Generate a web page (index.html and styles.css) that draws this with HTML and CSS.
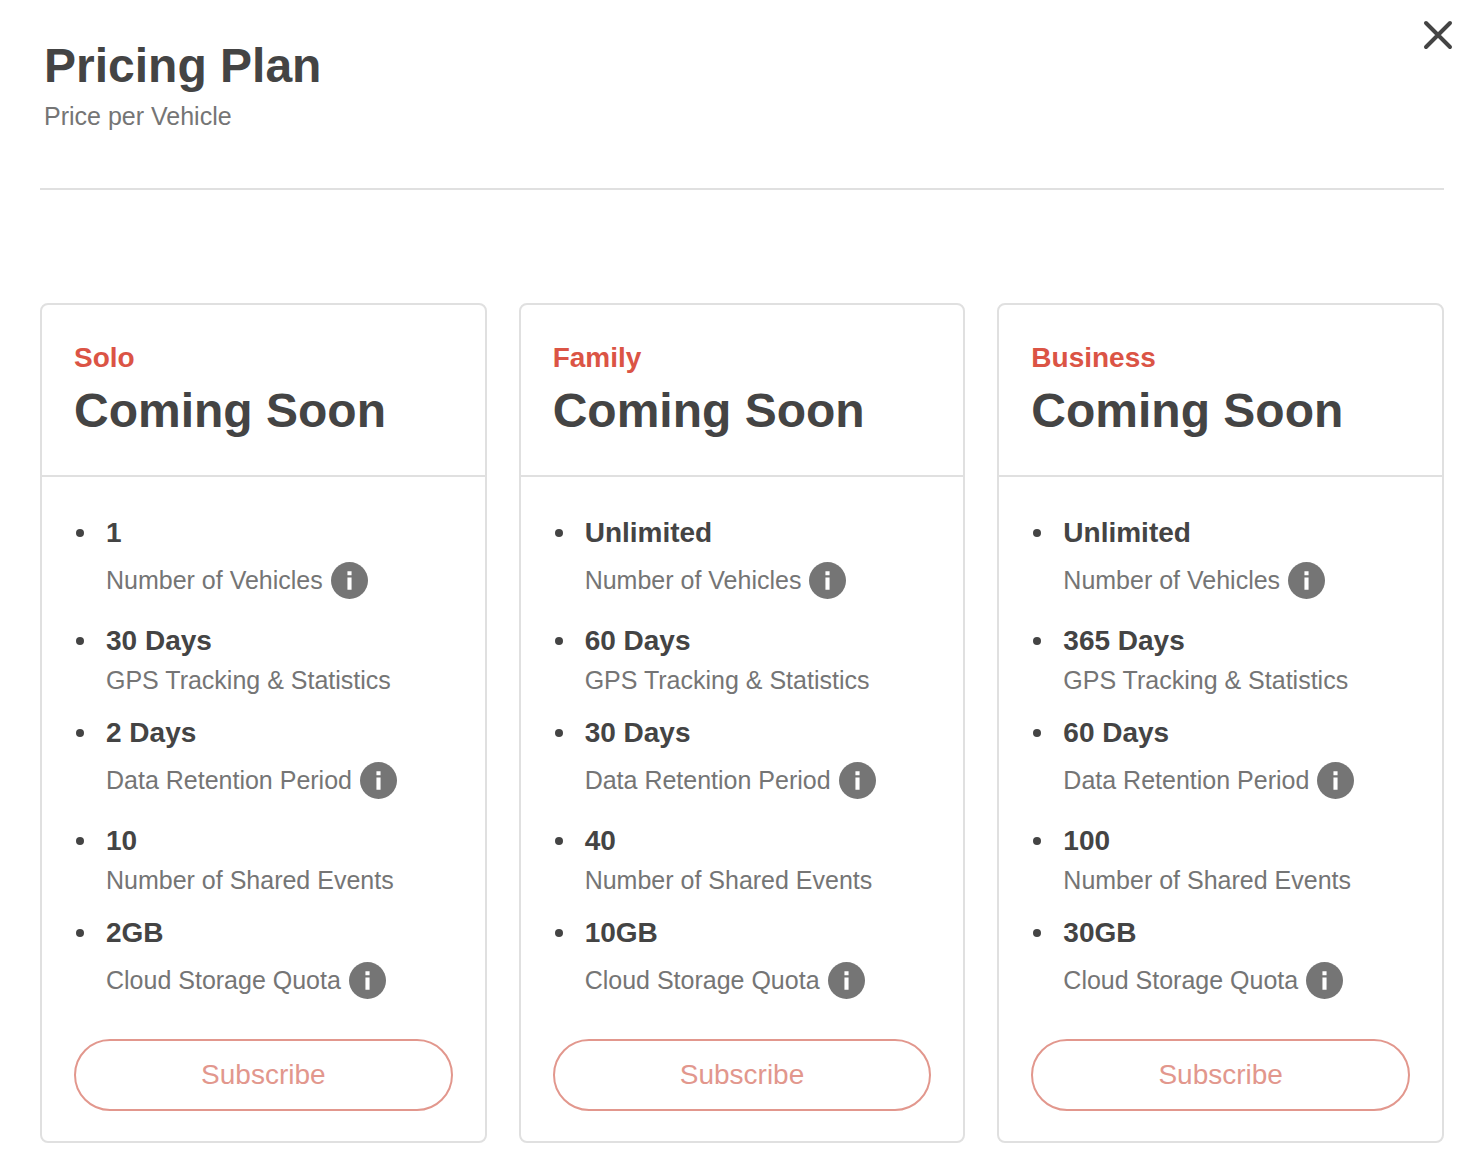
FILE: index.html
```html
<!DOCTYPE html>
<html lang="en">
<head>
    <meta charset="UTF-8">
    <meta name="viewport" content="width=device-width, initial-scale=1.0">
    <title>Pricing Plan</title>
    <link rel="stylesheet" href="styles.css">
</head>
<body>
    <svg class="sprite" aria-hidden="true">
        <symbol id="info" viewBox="0 0 36 36">
            <circle cx="18" cy="18" r="18" fill="currentColor"/>
            <path d="M16 9h4v4h-4zM16 15h4v12h-4z" fill="#fff"/>
        </symbol>
    </svg>

    <header class="header">
        <div class="heading">
            <h1>Pricing Plan</h1>
            <p class="subtitle">Price per Vehicle</p>
        </div>
        <button class="close" type="button" aria-label="Close">
            <svg width="30" height="30" viewBox="0 0 30 30"><path d="M3 3L27 27M27 3L3 27"/></svg>
        </button>
    </header>
    <hr>

    <main class="plans">
        <section class="card">
            <div class="card-header">
                <h2>Solo</h2>
                <p class="price">Coming Soon</p>
            </div>
            <div class="card-body">
                <ul class="features">
                    <li>
                        <strong>1</strong>
                        <span class="label with-info">Number of Vehicles <button class="info" type="button" aria-label="About number of vehicles"><svg><use href="#info"/></svg></button></span>
                    </li>
                    <li>
                        <strong>30 Days</strong>
                        <span class="label">GPS Tracking &amp; Statistics</span>
                    </li>
                    <li>
                        <strong>2 Days</strong>
                        <span class="label with-info">Data Retention Period <button class="info" type="button" aria-label="About data retention period"><svg><use href="#info"/></svg></button></span>
                    </li>
                    <li>
                        <strong>10</strong>
                        <span class="label">Number of Shared Events</span>
                    </li>
                    <li>
                        <strong>2GB</strong>
                        <span class="label with-info">Cloud Storage Quota <button class="info" type="button" aria-label="About cloud storage quota"><svg><use href="#info"/></svg></button></span>
                    </li>
                </ul>
                <button class="subscribe" type="button" disabled>Subscribe</button>
            </div>
        </section>

        <section class="card">
            <div class="card-header">
                <h2>Family</h2>
                <p class="price">Coming Soon</p>
            </div>
            <div class="card-body">
                <ul class="features">
                    <li>
                        <strong>Unlimited</strong>
                        <span class="label with-info">Number of Vehicles <button class="info" type="button" aria-label="About number of vehicles"><svg><use href="#info"/></svg></button></span>
                    </li>
                    <li>
                        <strong>60 Days</strong>
                        <span class="label">GPS Tracking &amp; Statistics</span>
                    </li>
                    <li>
                        <strong>30 Days</strong>
                        <span class="label with-info">Data Retention Period <button class="info" type="button" aria-label="About data retention period"><svg><use href="#info"/></svg></button></span>
                    </li>
                    <li>
                        <strong>40</strong>
                        <span class="label">Number of Shared Events</span>
                    </li>
                    <li>
                        <strong>10GB</strong>
                        <span class="label with-info">Cloud Storage Quota <button class="info" type="button" aria-label="About cloud storage quota"><svg><use href="#info"/></svg></button></span>
                    </li>
                </ul>
                <button class="subscribe" type="button" disabled>Subscribe</button>
            </div>
        </section>

        <section class="card">
            <div class="card-header">
                <h2>Business</h2>
                <p class="price">Coming Soon</p>
            </div>
            <div class="card-body">
                <ul class="features">
                    <li>
                        <strong>Unlimited</strong>
                        <span class="label with-info">Number of Vehicles <button class="info" type="button" aria-label="About number of vehicles"><svg><use href="#info"/></svg></button></span>
                    </li>
                    <li>
                        <strong>365 Days</strong>
                        <span class="label">GPS Tracking &amp; Statistics</span>
                    </li>
                    <li>
                        <strong>60 Days</strong>
                        <span class="label with-info">Data Retention Period <button class="info" type="button" aria-label="About data retention period"><svg><use href="#info"/></svg></button></span>
                    </li>
                    <li>
                        <strong>100</strong>
                        <span class="label">Number of Shared Events</span>
                    </li>
                    <li>
                        <strong>30GB</strong>
                        <span class="label with-info">Cloud Storage Quota <button class="info" type="button" aria-label="About cloud storage quota"><svg><use href="#info"/></svg></button></span>
                    </li>
                </ul>
                <button class="subscribe" type="button" disabled>Subscribe</button>
            </div>
        </section>
    </main>
</body>
</html>
```

FILE: styles.css
```css
* {
    box-sizing: border-box;
}

body {
    margin: 0;
    font-family: "Liberation Sans", Arial, Helvetica, sans-serif;
    color: #444;
    background-color: #fff;
}

h1, h2, p, ul {
    margin: 0;
    padding: 0;
}

button {
    font-family: inherit;
    background: none;
    border: none;
    padding: 0;
    cursor: pointer;
}

.sprite {
    display: none;
}

.header {
    display: flex;
    justify-content: space-between;
    align-items: flex-start;
    padding: 9px 20px 54px 44px;
}

.heading {
    padding-top: 25px;
}

h1, .price {
    font-size: 48px;
    font-weight: bold;
    line-height: 64px;
}

.subtitle, .label {
    font-size: 25px;
    line-height: 36px;
    color: #757575;
}

.close {
    display: flex;
    justify-content: center;
    align-items: center;
    width: 52px;
    height: 52px;
}

.close path {
    stroke: #444;
    stroke-width: 4;
    stroke-linecap: round;
    fill: none;
}

hr {
    margin: 0 40px;
    border: none;
    border-top: 2px solid #e0e0e0;
}

.plans {
    display: grid;
    grid-template-columns: repeat(3, 1fr);
    gap: 32px;
    padding: 113px 40px 28px;
}

.card {
    border: 2px solid #e0e0e0;
    border-radius: 8px;
}

.card-header {
    padding: 32px;
    border-bottom: 2px solid #e0e0e0;
}

h2 {
    font-size: 28px;
    line-height: 42px;
    color: #db5445;
}

.card-body {
    padding: 35px 32px 30px;
}

.features {
    display: flex;
    flex-direction: column;
    gap: 14px;
    list-style: none;
    margin-bottom: 33px;
}

.features li {
    display: grid;
    grid-template-columns: 8px 1fr;
    column-gap: 22px;
    align-items: center;
    padding-left: 2px;
}

.features li::before {
    content: "";
    height: 8px;
    border-radius: 50%;
    background-color: #444;
}

.features strong {
    font-size: 28px;
    line-height: 42px;
}

.label {
    grid-column: 2;
}

.with-info {
    display: flex;
    align-items: center;
    gap: 8px;
    height: 52px;
}

.info {
    display: flex;
    color: #757575;
}

.info svg {
    width: 37px;
    height: 37px;
}

.subscribe {
    display: block;
    width: 100%;
    height: 72px;
    border: 2px solid #e2978d;
    border-radius: 36px;
    font-size: 28px;
    color: #e2978d;
}

.subscribe:disabled {
    cursor: default;
}
```
